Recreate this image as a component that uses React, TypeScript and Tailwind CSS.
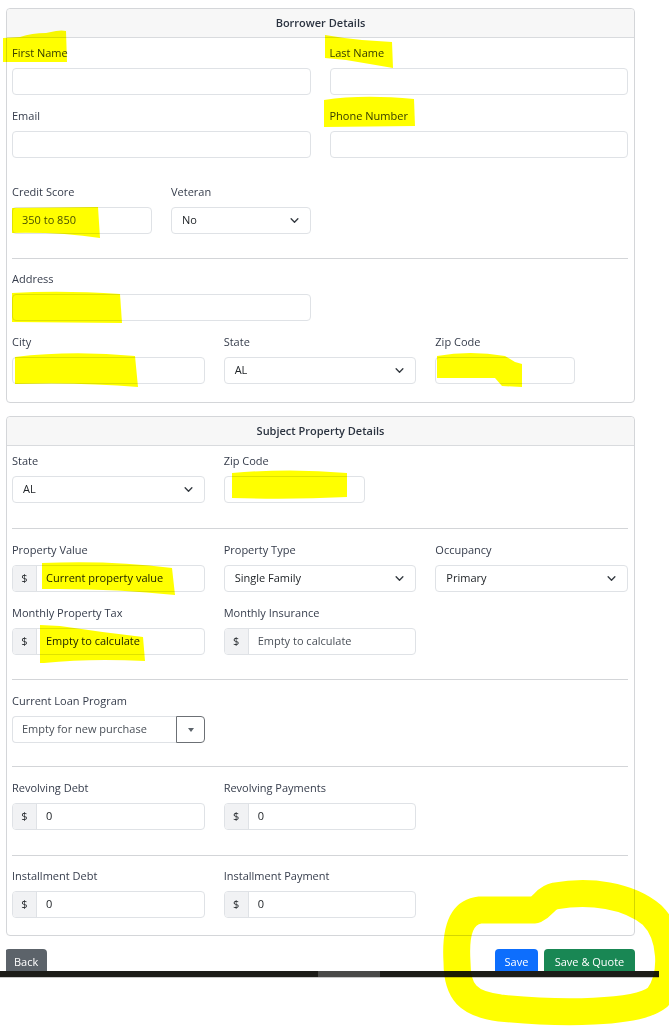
import React from 'react';

const font = { fontFamily: '"Open Sans", "Noto Sans", sans-serif' };

function Label({ children }: { children: React.ReactNode }) {
  return <div className="mb-[6px] text-[11px] leading-[18px] text-[#353c4b]">{children}</div>;
}

function Chevron() {
  return (
    <svg viewBox="0 0 16 16" className="h-[9px] w-[9px]" fill="none">
      <path d="M2 5l6 6 6-6" stroke="#343a40" strokeWidth="2.4" strokeLinecap="round" strokeLinejoin="round" />
    </svg>
  );
}

function TextBox({ placeholder, className = 'w-full' }: { placeholder?: string; className?: string }) {
  return (
    <div className={`flex h-[27px] items-center rounded-[4px] border border-[#dfe2e6] bg-white px-[9px] text-[11px] text-[#4a5058] ${className}`}>
      {placeholder}
    </div>
  );
}

function Select({ value, className = 'w-full' }: { value: string; className?: string }) {
  return (
    <div className={`flex h-[27px] items-center justify-between rounded-[4px] border border-[#dfe2e6] bg-white pl-[10px] pr-[11px] text-[11px] text-[#212529] ${className}`}>
      <span>{value}</span>
      <Chevron />
    </div>
  );
}

function Money({ value, muted }: { value: string; muted?: boolean }) {
  return (
    <div className="flex h-[27px] w-full overflow-hidden rounded-[4px] border border-[#dfe2e6] bg-white text-[11px]">
      <div className="flex w-[24px] items-center justify-center border-r border-[#dfe2e6] bg-[#f1f2f4] text-[#212529]">$</div>
      <div className={`flex items-center pl-[9px] ${muted ? 'text-[#4a5058]' : 'text-[#212529]'}`}>{value}</div>
    </div>
  );
}

function Field({ label, children }: { label: string; children: React.ReactNode }) {
  return (
    <div>
      <Label>{label}</Label>
      {children}
    </div>
  );
}

function Rule({ className = 'mt-[24px] mb-[12px]' }: { className?: string }) {
  return <div className={`h-px bg-[#d3d5d8] ${className}`} />;
}

function Card({ title, children, className = '' }: { title: string; children: React.ReactNode; className?: string }) {
  return (
    <div className={`rounded-[4px] border border-[#d4d6d9] bg-white ${className}`}>
      <div className="flex h-[29px] items-center justify-center rounded-t-[4px] border-b border-[#d9dbde] bg-[#f7f7f7] text-[11px] font-semibold text-[#2b3340]">
        {title}
      </div>
      {children}
    </div>
  );
}

const marks = [
  'M3 38 L20 37 Q32 33 46 33 L56 31 Q62 30 66 31 L67 62 L3 62 Z',
  'M325 35 Q342 38 362 40 L392 42 L393 68 Q370 64 346 60 L325 58 Z',
  'M324 100 Q362 94 414 99 L415 126 L324 127 Z',
  'M12 208 L98 207 L100 238 Q60 232 12 233 Z',
  'M12 293 Q62 290 120 294 L122 323 L12 322 Z',
  'M15 357 Q72 350 135 356 L138 387 Q80 382 15 384 Z',
  'M437 356 Q470 350 505 356 L515 362 L522 364 L522 387 L502 386 L495 378 Q465 378 437 378 Z',
  'M232 473 Q290 468 347 473 L347 497 Q290 500 232 498 Z',
  'M42 563 Q110 560 172 568 L175 595 Q110 588 42 589 Z',
  'M40 625 L60 626 Q100 632 143 637 L145 661 Q90 658 44 663 L40 663 Z',
];

export default function App() {
  return (
    <div className="relative h-[1026px] w-[669px] overflow-hidden bg-white" style={font}>
      <div className="ml-[6px] w-[629px] pt-[8px]">
        <Card title="Borrower Details">
          <div className="pb-[18px] pl-[5px] pr-[6px] pt-[6px]">
            <div className="mb-[12px] grid grid-cols-2 gap-x-[19px]">
              <Field label="First Name"><TextBox /></Field>
              <Field label="Last Name"><TextBox /></Field>
            </div>
            <div className="mb-[25px] grid grid-cols-2 gap-x-[19px]">
              <Field label="Email"><TextBox /></Field>
              <Field label="Phone Number"><TextBox /></Field>
            </div>
            <div className="flex gap-x-[19px]">
              <div className="w-[140px]">
                <Field label="Credit Score"><TextBox placeholder="350 to 850" /></Field>
              </div>
              <div className="w-[140px]">
                <Field label="Veteran"><Select value="No" /></Field>
              </div>
            </div>
            <Rule className="mb-[11px] mt-[24px]" />
            <div className="mb-[12px] grid grid-cols-2 gap-x-[19px]">
              <Field label="Address"><TextBox /></Field>
            </div>
            <div className="grid grid-cols-3 gap-x-[19px]">
              <Field label="City"><TextBox /></Field>
              <Field label="State"><Select value="AL" /></Field>
              <Field label="Zip Code"><TextBox className="w-[140px]" /></Field>
            </div>
          </div>
        </Card>

        <Card title="Subject Property Details" className="mt-[13px]">
          <div className="pb-[17px] pl-[5px] pr-[6px] pt-[6px]">
            <div className="grid grid-cols-3 gap-x-[19px]">
              <Field label="State"><Select value="AL" /></Field>
              <Field label="Zip Code"><TextBox className="w-[141px]" /></Field>
            </div>
            <Rule className="mb-[12px] mt-[25px]" />
            <div className="mb-[12px] grid grid-cols-3 gap-x-[19px]">
              <Field label="Property Value"><Money value="Current property value" /></Field>
              <Field label="Property Type"><Select value="Single Family" /></Field>
              <Field label="Occupancy"><Select value="Primary" /></Field>
            </div>
            <div className="grid grid-cols-3 gap-x-[19px]">
              <Field label="Monthly Property Tax"><Money value="Empty to calculate" /></Field>
              <Field label="Monthly Insurance"><Money value="Empty to calculate" muted /></Field>
            </div>
            <Rule className="mb-[12px] mt-[24px]" />
            <div className="grid grid-cols-3 gap-x-[19px]">
              <Field label="Current Loan Program">
                <div className="flex h-[27px] w-[193px]">
                  <div className="flex flex-1 items-center rounded-l-[4px] border border-r-0 border-[#dfe2e6] pl-[9px] text-[11px] text-[#4a5058]">
                    Empty for new purchase
                  </div>
                  <div className="flex w-[29px] items-center justify-center rounded-r-[4px] border border-[#6c7075]">
                    <span className="block h-0 w-0 border-x-[3px] border-t-[4px] border-x-transparent border-t-[#5c636a]" />
                  </div>
                </div>
              </Field>
            </div>
            <Rule className="mb-[12px] mt-[23px]" />
            <div className="grid grid-cols-3 gap-x-[19px]">
              <Field label="Revolving Debt"><Money value="0" /></Field>
              <Field label="Revolving Payments"><Money value="0" /></Field>
            </div>
            <Rule className="mb-[11px] mt-[25px]" />
            <div className="grid grid-cols-3 gap-x-[19px]">
              <Field label="Installment Debt"><Money value="0" /></Field>
              <Field label="Installment Payment"><Money value="0" /></Field>
            </div>
          </div>
        </Card>

        <div className="mt-[13px] flex h-[22px] items-start justify-between overflow-hidden">
          <button className="-ml-px h-[27px] rounded-[4px] bg-[#5c636a] px-[9px] text-[11px] text-white">Back</button>
          <div className="flex gap-[6px]">
            <button className="h-[27px] w-[43px] rounded-[4px] bg-[#0d6efd] text-[11px] text-white">Save</button>
            <button className="h-[27px] w-[91px] rounded-[4px] bg-[#198754] text-[11px] text-white">Save &amp; Quote</button>
          </div>
        </div>
      </div>

      <div className="flex h-[7px] w-[659px] border-b border-[#c9c9c9] bg-[#1c1c18]">
        <div className="ml-[318px] h-full w-[62px] bg-[#4a4a48]" />
      </div>

      <svg className="pointer-events-none absolute inset-0 mix-blend-multiply" width="669" height="1026" viewBox="0 0 669 1026">
        {marks.map((d) => (
          <path key={d} d={d} fill="#ffff00" />
        ))}
        <path
          d="M457 962 C455 930 462 912 480 910 L535 910 C545 905 545 898 555 896 C590 890 628 895 652 915 C672 935 674 975 658 997 C638 1014 560 1014 500 1008 C468 1004 457 992 457 962 Z"
          fill="none"
          stroke="#ffff00"
          strokeWidth="27"
          strokeLinejoin="round"
        />
        <path d="M470 1000 C520 1016 600 1018 650 1004" fill="none" stroke="#ffff00" strokeWidth="22" strokeLinecap="round" />
      </svg>
    </div>
  );
}
